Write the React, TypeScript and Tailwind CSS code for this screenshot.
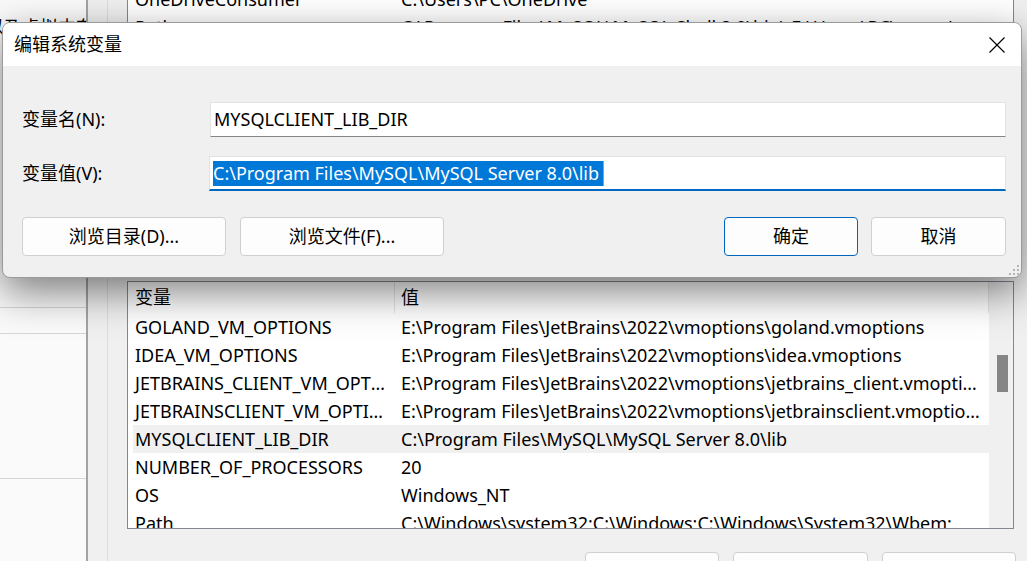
const font = { fontFamily: '"Noto Sans", "Noto Sans CJK SC", sans-serif' };

const systemVars = [
  { name: "GOLAND_VM_OPTIONS", value: "E:\\Program Files\\JetBrains\\2022\\vmoptions\\goland.vmoptions" },
  { name: "IDEA_VM_OPTIONS", value: "E:\\Program Files\\JetBrains\\2022\\vmoptions\\idea.vmoptions" },
  { name: "JETBRAINS_CLIENT_VM_OPTIONS", value: "E:\\Program Files\\JetBrains\\2022\\vmoptions\\jetbrains_client.vmoptions" },
  { name: "JETBRAINSCLIENT_VM_OPTIONS", value: "E:\\Program Files\\JetBrains\\2022\\vmoptions\\jetbrainsclient.vmoptions" },
  { name: "MYSQLCLIENT_LIB_DIR", value: "C:\\Program Files\\MySQL\\MySQL Server 8.0\\lib", selected: true },
  { name: "NUMBER_OF_PROCESSORS", value: "20" },
  { name: "OS", value: "Windows_NT" },
  { name: "Path", value: "C:\\Windows\\system32;C:\\Windows;C:\\Windows\\System32\\Wbem;" },
];

const userVars = [
  { name: "OneDriveConsumer", value: "C:\\Users\\PC\\OneDrive" },
  { name: "Path", value: "C:\\Program Files\\MySQL\\MySQL Shell 8.0\\bin\\;E:\\Users\\PC\\.cargo\\" },
];

const VarRow = ({ name, value, selected }: { name: string; value: string; selected?: boolean }) => (
  <div className={`flex h-[28px] shrink-0 items-center text-[18px] text-black ${selected ? "bg-[#f0f0f0]" : ""}`}>
    <div className="w-[262px] shrink-0 truncate pl-[2px] pr-[4px]">{name}</div>
    <div className="min-w-0 flex-1 truncate whitespace-nowrap pl-[6px] pr-[6px]">{value}</div>
  </div>
);

const WinButton = ({ label, primary, className = "" }: { label: string; primary?: boolean; className?: string }) => (
  <button
    className={`flex h-[39px] shrink-0 items-center justify-center rounded-[4px] border bg-[#fdfdfd] text-[18px] text-black ${
      primary ? "border-[#0067c0]" : "border-[#d0d0d0]"
    } ${className}`}
  >
    {label}
  </button>
);

export default function App() {
  return (
    <div className="relative h-[561px] w-[1027px] overflow-hidden bg-[#f0f0f0]" style={font}>
      {/* background windows */}
      <div className="flex h-full">
        {/* system properties window, left */}
        <div className="flex w-[88px] shrink-0 flex-col overflow-hidden border-r-2 border-[#a3a3a3] bg-[#fafafa]">
          <div className="ml-[-14px] mt-[14px] shrink-0 whitespace-nowrap text-[18px] text-black">以及虚拟内存</div>
          <div className="mt-[266px] shrink-0 border-t border-[#d6d6d6]" />
          <div className="mt-[25px] shrink-0 border-t border-[#d6d6d6]" />
          <div className="mt-[144px] shrink-0 border-t border-[#d6d6d6]" />
        </div>

        {/* environment variables window */}
        <div className="w-[20px] shrink-0 border-r border-[#dcdcdc] bg-[#f0f0f0]" />
        <div className="flex min-w-0 flex-1 flex-col overflow-hidden pl-[19px] pr-[13px]">
          {/* user variables list */}
          <div className="h-[260px] shrink-0 overflow-hidden border-x border-[#828790] bg-white">
            <div className="mt-[-15px] pl-[5px] pr-[22px]">
              {userVars.map((v) => (
                <VarRow key={v.name} name={v.name} value={v.value} />
              ))}
            </div>
          </div>

          {/* system variables list */}
          <div className="mt-[21px] flex h-[248px] shrink-0 border border-[#828790] bg-white">
            <div className="flex min-w-0 flex-1 flex-col overflow-hidden pl-[5px]">
              <div className="flex h-[31px] shrink-0 items-center text-[18px] text-black">
                <div className="flex h-full w-[262px] shrink-0 items-center border-r border-[#e5e5e5] pl-[2px]">变量</div>
                <div className="flex h-full flex-1 items-center border-r border-[#e5e5e5] pl-[6px]">值</div>
              </div>
              {systemVars.map((v) => (
                <VarRow key={v.name} name={v.name} value={v.value} selected={v.selected} />
              ))}
            </div>
            {/* scrollbar */}
            <div className="w-[24px] shrink-0 bg-[#f0f0f0] pl-[8px] pt-[73px]">
              <div className="h-[37px] w-[11px] bg-[#858585]" />
            </div>
          </div>

          <div className="mt-[23px] flex shrink-0 gap-[14px] pl-[458px]">
            <WinButton label="新建(W)..." className="w-[134px]" />
            <WinButton label="编辑(I)..." className="w-[135px]" />
            <WinButton label="删除(L)" className="w-[134px]" />
          </div>
        </div>
      </div>

      {/* edit dialog on top */}
      <div className="absolute left-[2px] top-[22px] flex h-[256px] w-[1020px] flex-col overflow-hidden rounded-[8px] border border-[#9a9a9a] bg-[#f0f0f0] shadow-[0_14px_40px_rgba(0,0,0,0.5)]">
        <div className="flex h-[43px] shrink-0 items-center justify-between bg-white pl-[11px] pr-[15px]">
          <span className="text-[18px] text-black">编辑系统变量</span>
          <svg width="16" height="16" viewBox="0 0 16 16" className="mr-[1px]">
            <path d="M0.5 0.5 L15.5 15.5 M15.5 0.5 L0.5 15.5" stroke="#000" strokeWidth="1.2" fill="none" />
          </svg>
        </div>

        <div className="relative flex flex-1 flex-col pl-[19px] pr-[15px] pt-[36px]">
          <div className="flex items-center">
            <label className="w-[188px] shrink-0 text-[18px] text-black">变量名(N):</label>
            <div className="flex h-[35px] flex-1 items-center border border-[#e3e3e3] border-b-[#868686] bg-white pl-[3px] text-[18px] text-black">
              MYSQLCLIENT_LIB_DIR
            </div>
          </div>

          <div className="mt-[19px] flex items-center">
            <label className="w-[187px] shrink-0 text-[18px] text-black">变量值(V):</label>
            <div className="flex h-[35px] flex-1 items-center border border-b-2 border-[#e3e3e3] border-b-[#0067c0] bg-white pl-[3px] text-[18px]">
              <span className="whitespace-nowrap bg-[#0078d7] pr-[4px] leading-[25px] text-white">C:\Program Files\MySQL\MySQL Server 8.0\lib</span>
              <span className="h-[25px] w-[1px] bg-[#f08a24]" />
            </div>
          </div>

          <div className="mt-[26px] flex items-center">
            <WinButton label="浏览目录(D)..." className="w-[204px]" />
            <WinButton label="浏览文件(F)..." className="ml-[14px] w-[204px]" />
            <WinButton label="确定" primary className="ml-auto w-[134px]" />
            <WinButton label="取消" className="ml-[13px] w-[135px]" />
          </div>

          {/* resize grip */}
          <svg className="absolute bottom-[1px] right-[1px]" width="12" height="12" viewBox="0 0 12 12">
            <rect x="9" y="1" width="2" height="2" fill="#b5b5b5" />
            <rect x="5" y="5" width="2" height="2" fill="#b5b5b5" />
            <rect x="9" y="5" width="2" height="2" fill="#b5b5b5" />
            <rect x="1" y="9" width="2" height="2" fill="#b5b5b5" />
            <rect x="5" y="9" width="2" height="2" fill="#b5b5b5" />
            <rect x="9" y="9" width="2" height="2" fill="#b5b5b5" />
          </svg>
        </div>
      </div>
    </div>
  );
}
